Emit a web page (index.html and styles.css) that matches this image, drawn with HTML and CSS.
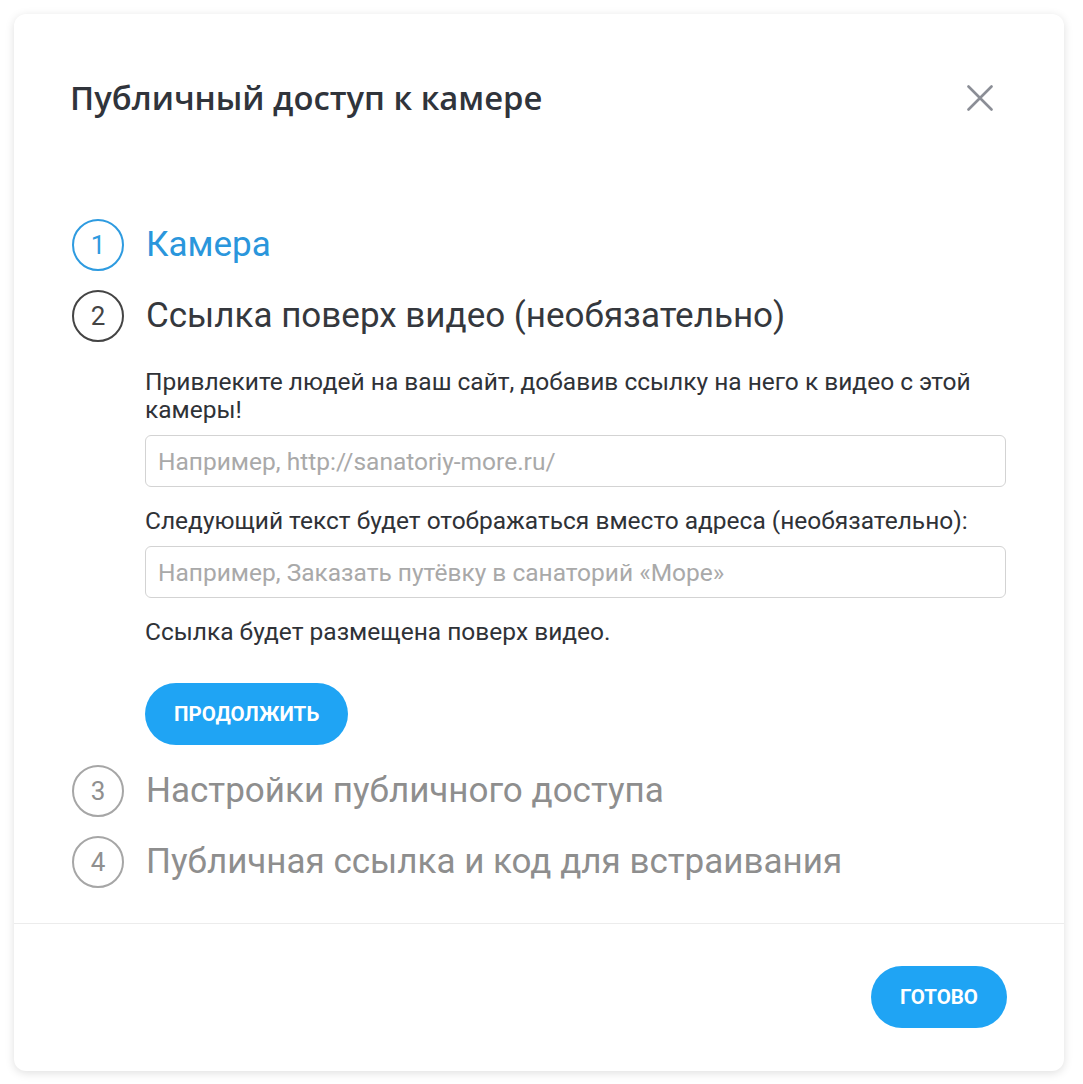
FILE: index.html
```html
<!DOCTYPE html>
<html lang="ru">
<head>
  <meta charset="UTF-8" />
  <title>Публичный доступ к камере</title>
  <link rel="stylesheet" href="styles.css">
</head>
<body>
  <div class="modal">
    <div class="modal-header">
      <h1 class="modal-title">Публичный доступ к камере</h1>
      <button class="close-btn" aria-label="Закрыть">
        <svg width="26" height="26" viewBox="0 0 26 26">
          <path d="M1.5 1.5 L24.5 24.5 M24.5 1.5 L1.5 24.5" stroke="#8b8e96" stroke-width="2.6" stroke-linecap="round" fill="none"/>
        </svg>
      </button>
    </div>

    <div class="steps">
      <div class="step step-done">
        <span class="step-num">1</span>
        <span class="step-title">Камера</span>
      </div>

      <div class="step step-active">
        <span class="step-num">2</span>
        <span class="step-title">Ссылка поверх видео (необязательно)</span>
      </div>

      <div class="step-body">
        <p class="hint">Привлеките людей на ваш сайт, добавив ссылку на него к видео с этой камеры!</p>
        <input class="field" type="text" placeholder="Например, http://sanatoriy-more.ru/">
        <p class="hint label">Следующий текст будет отображаться вместо адреса (необязательно):</p>
        <input class="field" type="text" placeholder="Например, Заказать путёвку в санаторий «Море»">
        <p class="hint note">Ссылка будет размещена поверх видео.</p>
        <button class="btn">Продолжить</button>
      </div>

      <div class="step step-next">
        <span class="step-num">3</span>
        <span class="step-title">Настройки публичного доступа</span>
      </div>

      <div class="step step-next">
        <span class="step-num">4</span>
        <span class="step-title">Публичная ссылка и код для встраивания</span>
      </div>
    </div>

    <div class="modal-footer">
      <button class="btn">Готово</button>
    </div>
  </div>
</body>
</html>
```

FILE: styles.css
```css
body {
  margin: 0;
  padding: 14px 19px 13px 14px;
  background: #fff;
  font-family: Roboto, "Noto Sans", sans-serif;
  color: #2f3237;
}

.modal {
  background: #fff;
  border-radius: 12px;
  box-shadow: 0 2px 10px rgba(0,0,0,0.13);
  height: 1057px;
  box-sizing: border-box;
  display: flex;
  flex-direction: column;
}

.modal-header {
  display: flex;
  align-items: center;
  justify-content: space-between;
  padding: 64px 71px 0 56px;
}

.modal-title {
  margin: 0;
  font-family: "Open Sans", sans-serif;
  font-weight: 600;
  font-size: 32.8px;
  line-height: 40px;
  color: #30343b;
}

.close-btn {
  border: none;
  background: none;
  padding: 0;
  cursor: pointer;
  display: flex;
}

/* kroky */
.steps {
  padding: 101px 58px 0 58px;
  flex-grow: 1;
}

.step {
  display: flex;
  align-items: center;
  gap: 22px;
  margin-bottom: 19px;
}

.step-num {
  width: 52px;
  height: 52px;
  box-sizing: border-box;
  border-radius: 50%;
  border: 2px solid #444;
  display: flex;
  align-items: center;
  justify-content: center;
  font-size: 26px;
  color: #444;
  flex-shrink: 0;
}

.step-title {
  font-size: 35px;
  line-height: 42px;
}

.step-done .step-num {
  border-color: #2e9be0;
  color: #2e9be0;
}
.step-done .step-title {
  color: #2a96dc;
}

.step-active .step-title {
  color: #35383d;
}

.step-next .step-num {
  border-color: #a6a6a6;
  color: #909090;
}
.step-next .step-title {
  color: #8e8e8e;
}

/* margin-top se slučuje s margin-bottom kroku nad ním */
.step-body {
  padding-left: 73px;
  margin-top: 26px;
  margin-bottom: 20px;
}

.hint {
  margin: 0;
  font-size: 24.5px;
  line-height: 28px;
  color: #2f3237;
}

.field {
  display: block;
  width: 100%;
  height: 52px;
  box-sizing: border-box;
  border: 1px solid #d3d3d3;
  border-radius: 6px;
  padding: 0 12px;
  font-family: Roboto, sans-serif;
  font-size: 24.5px;
  margin-top: 11px;
  margin-bottom: 20px;
}
.field::placeholder {
  color: #a9a9a9;
}

.note {
  margin-top: 18px;
}

.btn {
  background-color: #1fa4f4;
  color: #fff;
  border: none;
  border-radius: 31px;
  height: 62px;
  padding: 0 29px;
  font-family: Roboto, sans-serif;
  font-weight: 700;
  font-size: 20.5px;
  text-transform: uppercase;
  cursor: pointer;
}

.step-body .btn {
  margin-top: 37px;
}

.modal-footer {
  border-top: 1px solid #ececec;
  display: flex;
  justify-content: flex-end;
  padding: 42px 57px 43px;
}
```
